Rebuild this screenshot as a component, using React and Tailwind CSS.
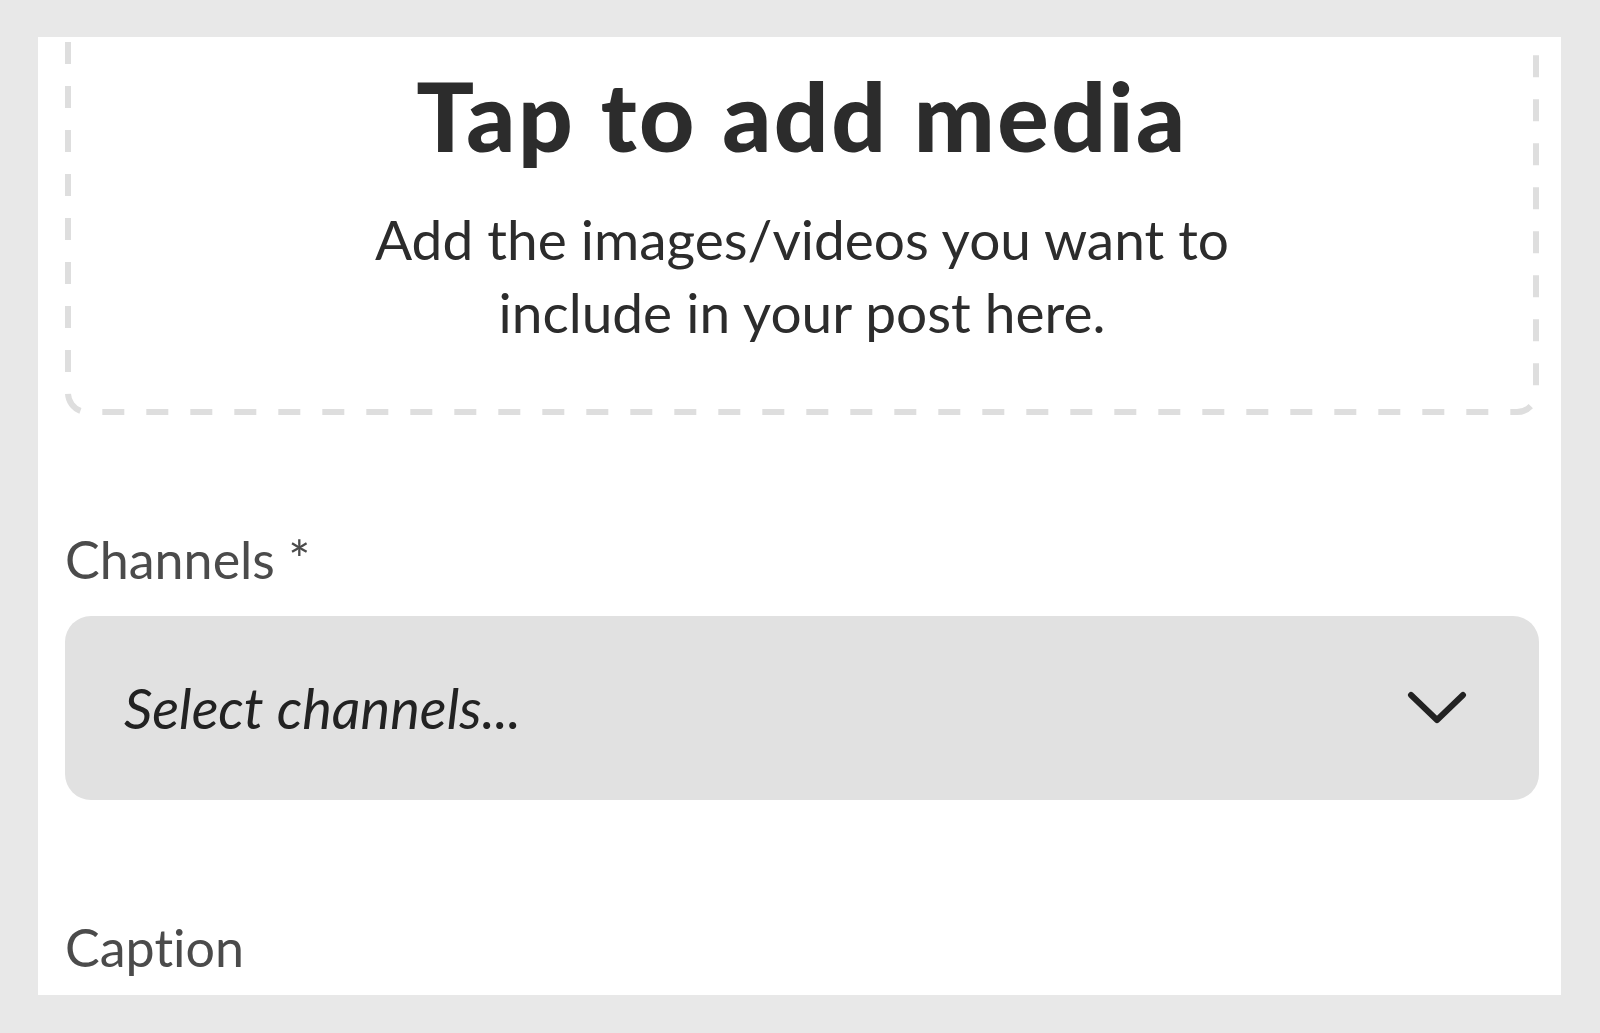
import React from "react";

const font = { fontFamily: "Lato, 'Open Sans', sans-serif" };

const Chevron = () => (
  <svg width="60" height="36" viewBox="0 0 60 36" fill="none">
    <path
      d="M4 5 L30 30 L56 5"
      stroke="#222222"
      strokeWidth="6"
      strokeLinecap="round"
      strokeLinejoin="round"
    />
  </svg>
);

// dashed outline drawn as svg so the dash length matches (22 on / 22 off)
const DashedOutline = () => (
  <svg className="absolute inset-[3px] w-[calc(100%-6px)] h-[calc(100%-6px)] overflow-visible pointer-events-none">
    <rect
      x="0"
      y="0"
      width="100%"
      height="100%"
      rx="19"
      fill="none"
      stroke="#dedede"
      strokeWidth="6"
      strokeDasharray="22 22"
    />
  </svg>
);

const App = () => {
  return (
    <div
      className="w-[1600px] h-[1033px] bg-[#e8e8e8] pl-[38px] pr-[39px] pt-[37px] overflow-hidden [font-variant-ligatures:none]"
      style={font}
    >
      <div className="h-[958px] bg-white overflow-hidden pl-[27px] pr-[22px]">
        {/* Media drop zone */}
        <div className="relative -mt-[40px] p-[6px] pt-[72px] pb-[66px] flex flex-col items-center text-center">
          <DashedOutline />
          <h1 className="text-[96px] leading-[92px] font-black text-[#2c2c2c] tracking-[2.5px]">
            Tap to add media
          </h1>
          <p className="mt-[42px] text-[55px] leading-[73px] text-[#2c2c2c] w-[900px]">
            Add the images/videos you want to include in your post here.
          </p>
        </div>

        {/* Channels */}
        <div className="mt-[114px] text-[52px] leading-[60px] text-[#4b4b4b]">
          Channels *
        </div>
        <button className="mt-[27px] w-full h-[184px] bg-[#e1e1e1] rounded-[26px] pl-[59px] pr-[72px] flex items-center justify-between">
          <span className="text-[56px] italic text-[#222222]">
            Select channels...
          </span>
          <Chevron />
        </button>

        {/* Caption */}
        <div className="mt-[117px] text-[52px] leading-[60px] text-[#4b4b4b]">
          Caption
        </div>
      </div>
    </div>
  );
};

export default App;
